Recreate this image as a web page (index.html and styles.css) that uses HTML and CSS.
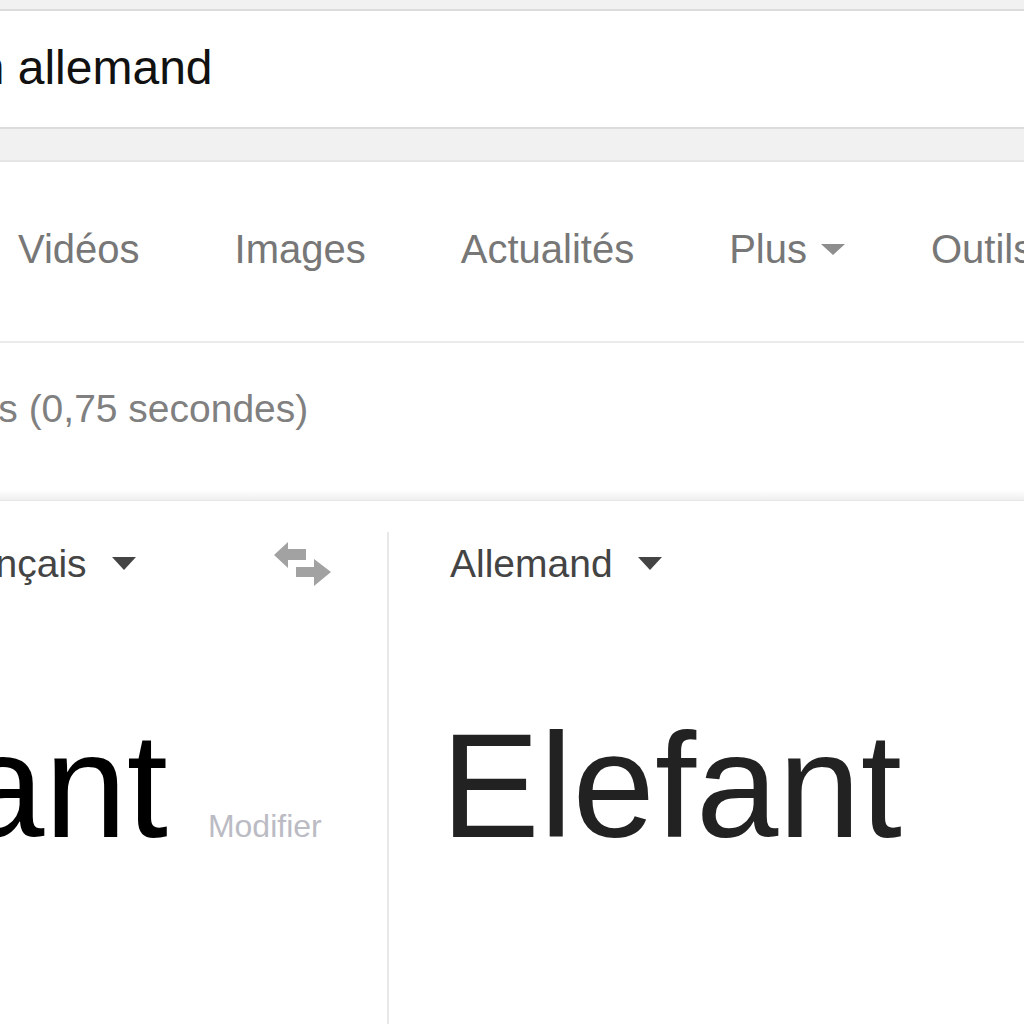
FILE: index.html
```html
<!DOCTYPE html>
<html lang="fr">
<head>
<meta charset="utf-8">
<title>éléphant en allemand</title>
<link rel="stylesheet" href="styles.css">
</head>
<body>
<div class="page">
  <div class="topband"></div>
  <div class="searchbox">
    <span class="query">en allemand</span>
  </div>
  <div class="band"></div>
  <nav class="tabs">
    <span class="tab">Vidéos</span>
    <span class="tab">Images</span>
    <span class="tab">Actualités</span>
    <span class="tab tab-more">Plus <span class="caret caret-nav"></span></span>
    <span class="tab">Outils de recherche</span>
  </nav>
  <div class="stats"><span class="stats-text">Environ 3 950 000 résultats (0,75 secondes)</span></div>
  <div class="shadow"></div>
  <div class="card">
    <div class="col col-src">
      <div class="langrow">
        <span class="lang lang-src">Français</span>
        <span class="caret caret-lang"></span>
        <svg class="swap" width="58" height="48" viewBox="0 0 58 48" aria-hidden="true">
          <path d="M0 15 L14 2 L14 9 L32 9 L32 20 L14 20 L14 28 Z" fill="#a2a2a2"/>
          <path d="M57 32 L40 19 L40 27 L22 27 L22 37 L40 37 L40 46 Z" fill="#a2a2a2"/>
        </svg>
      </div>
      <div class="bigrow">
        <span class="big big-src">éléphant</span>
        <span class="edit">Modifier</span>
      </div>
    </div>
    <div class="col col-dst">
      <div class="langrow langrow-dst">
        <span class="lang">Allemand</span>
        <span class="caret caret-lang"></span>
      </div>
      <div class="bigrow bigrow-dst">
        <span class="big big-dst">Elefant</span>
      </div>
    </div>
  </div>
</div>
</body>
</html>
```

FILE: styles.css
```css
html, body {
  margin: 0;
  padding: 0;
  background: #fff;
}
body {
  font-family: "Liberation Sans", Arial, sans-serif;
  overflow: hidden;
  width: 1024px;
  height: 1024px;
}
.page {
  width: 1024px;
  overflow: hidden;
}
.topband {
  height: 9px;
  background: #f1f1f1;
}
.searchbox {
  border-top: 2px solid #dcdcdc;
  border-bottom: 2px solid #dcdcdc;
  height: 120px;
  box-sizing: border-box;
  padding-top: 33px;
  white-space: nowrap;
  background: #fff;
}
.query {
  display: inline-block;
  font-size: 48px;
  line-height: 48px;
  color: #111;
  margin-left: -49px;
}
.band {
  height: 31px;
  background: #f1f1f1;
  border-bottom: 2px solid #e5e5e5;
}
.tabs {
  display: flex;
  align-items: center;
  white-space: nowrap;
  gap: 95px;
  padding: 67px 0 72px 18px;
  border-bottom: 2px solid #ebebeb;
}
.tab {
  font-size: 40px;
  line-height: 40px;
  color: #777;
}
.tab-more {
  display: flex;
  align-items: center;
  margin-right: -9px;
}
.caret {
  display: inline-block;
  width: 0;
  height: 0;
  border-left: 12px solid transparent;
  border-right: 12px solid transparent;
}
.caret-nav {
  border-top: 11px solid #8e8e8e;
  margin-left: 14px;
}
.stats {
  padding: 46px 0 62px 0;
  white-space: nowrap;
}
.stats-text {
  display: inline-block;
  font-size: 39px;
  line-height: 39px;
  color: #808080;
  margin-left: -457px;
}
.shadow {
  height: 10px;
  background: linear-gradient(#fff, #efefef);
  border-bottom: 1px solid #e6e6e6;
}
.card {
  display: flex;
  padding-top: 31px;
  min-height: 540px;
}
.col-src {
  width: 387px;
  flex: none;
}
.col-dst {
  flex: 1;
  border-left: 2px solid #e8e8e8;
}
.langrow {
  display: flex;
  align-items: center;
  margin-top: 12px;
  height: 39px;
  white-space: nowrap;
}
.langrow-dst {
  padding-left: 61px;
}
.lang {
  font-size: 39px;
  line-height: 39px;
  color: #444;
}
.lang-src {
  margin-left: -63px;
}
.caret-lang {
  border-top: 13px solid #444;
  margin-left: 25px;
}
.swap {
  margin-left: auto;
  margin-right: 55px;
  flex: none;
}
.bigrow {
  display: flex;
  align-items: baseline;
  margin-top: 129px;
  white-space: nowrap;
}
.bigrow-dst {
  padding-left: 52px;
}
.big {
  font-size: 148px;
  line-height: 148px;
}
.big-src {
  color: #000;
  margin-left: -400px;
}
.big-dst {
  color: #222;
}
.edit {
  font-size: 32px;
  color: #bbbbc4;
  margin-left: 40px;
}
```
